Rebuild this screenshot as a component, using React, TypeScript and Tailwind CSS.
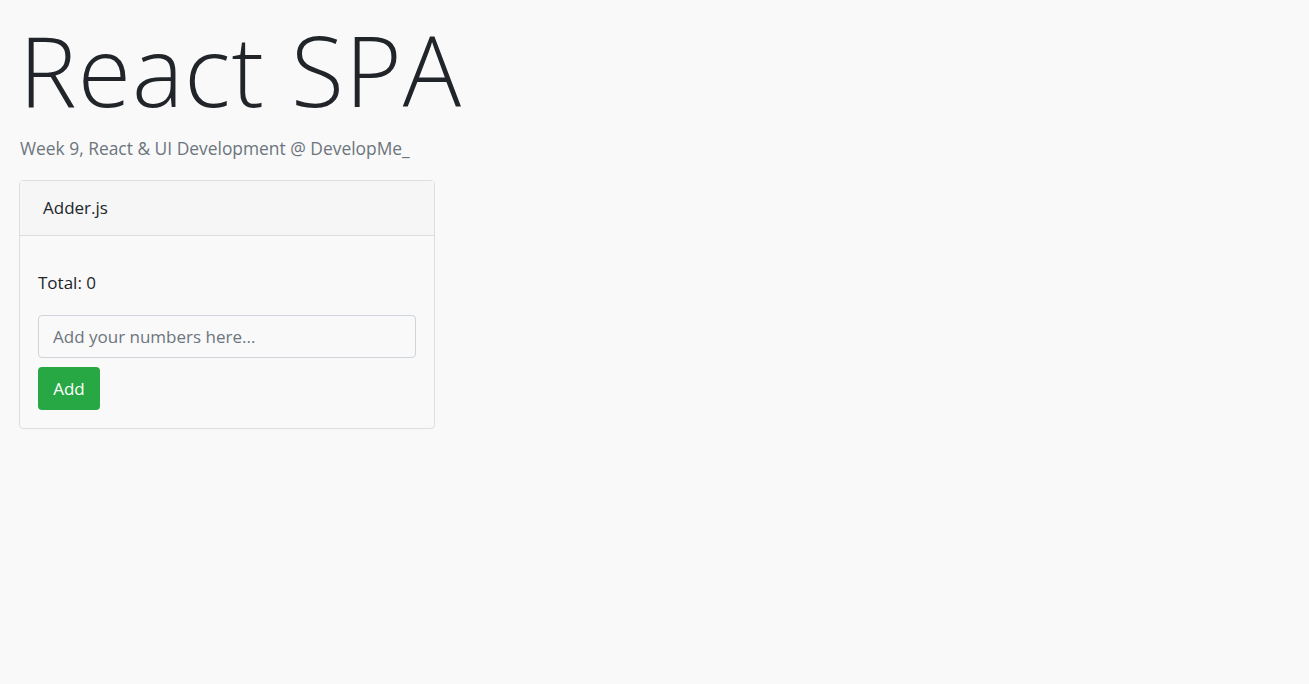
export default function App() {
  return (
    <div className="min-h-screen bg-[#f9f9f9] px-[20px] text-[#212529]" style={{ fontFamily: '"Open Sans", "Noto Sans", sans-serif' }}>
      <h1 className="pt-[12px] text-[97px] font-light leading-[115px] tracking-[1px] -ml-[1px]">React SPA</h1>
      <p className="mt-[9px] text-[17.4px] leading-[24px] text-[#6c757d]">Week 9, React &amp; UI Development @ DevelopMe_</p>

      {/* Adder card */}
      <div className="mt-[20px] -ml-px w-[416px] rounded-[4px] border border-[#dedede] bg-[#f9f9f9]">
        <div className="flex h-[55px] items-center border-b border-[#dedede] bg-[#f6f6f6] px-[23px] text-[17px]">
          Adder.js
        </div>
        <div className="px-[18px] pt-[35px] pb-[18px]">
          <p className="text-[17px] leading-[24px]">Total: 0</p>
          <input
            className="mt-[20px] block h-[43px] w-full rounded-[4px] border border-[#ced4da] bg-[#f9f9f9] px-[14px] text-[17px] placeholder:text-[#6c757d] outline-none"
            placeholder="Add your numbers here..."
          />
          <button className="mt-[9px] h-[43px] w-[62px] rounded-[4px] bg-[#28a745] text-[17px] text-white">Add</button>
        </div>
      </div>
    </div>
  );
}
